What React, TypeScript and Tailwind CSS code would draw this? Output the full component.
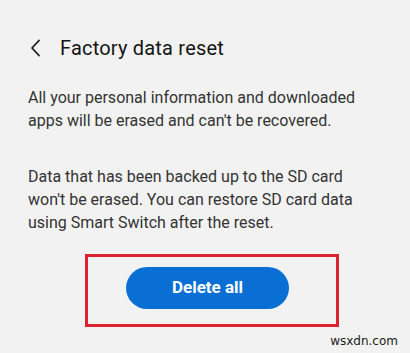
import React from "react";

export default function App() {
  return (
    <div
      className="w-[410px] h-[353px] bg-[#f2f2f2] overflow-hidden flex flex-col"
      style={{ fontFamily: "Roboto, 'Noto Sans', sans-serif" }}
    >
      <div className="flex items-center h-[28px] mt-[34px] pl-[30px]">
        <svg width="11" height="18" viewBox="0 0 11 18" className="shrink-0">
          <path d="M9 1.5 L2 9 L9 16.5" fill="none" stroke="#1a1a1a" strokeWidth="1.8" strokeLinecap="round" strokeLinejoin="round" />
        </svg>
        <div className="ml-[19px] text-[20px] leading-[28px] text-[#141414] tracking-[0.2px]">
          Factory data reset
        </div>
      </div>

      <div className="pl-[28px] pr-[20px] text-[16px] leading-[23px] text-[#333333]">
        <p className="mt-[24px]">
          All your personal information and downloaded
          <br />
          apps will be erased and can't be recovered.
        </p>
        <p className="mt-[33px]">
          Data that has been backed up to the SD card
          <br />
          won't be erased. You can restore SD card data
          <br />
          using Smart Switch after the reset.
        </p>
      </div>

      <div className="ml-[85px] mt-[20px] w-[254px] h-[73px] border-[3px] border-[#dc2430] pt-[10px] pl-[38px]">
        <div className="w-[163px] h-[42px] rounded-full bg-[#0a6fd4] flex items-center justify-center text-white text-[17px] font-bold">
          Delete all
        </div>
      </div>

      <div className="flex justify-end pr-[12px] mt-[7px]">
        <span className="text-[12px] leading-[14px] text-[#1a1a1a]" style={{ fontFamily: "'DejaVu Sans', sans-serif" }}>
          wsxdn.com
        </span>
      </div>
    </div>
  );
}
